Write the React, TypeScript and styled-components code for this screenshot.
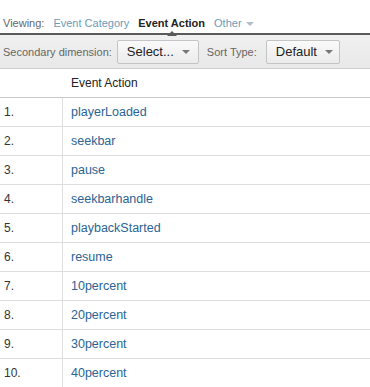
import styled, { createGlobalStyle } from 'styled-components';

const GlobalStyle = createGlobalStyle`
  html, body {
    margin: 0;
    padding: 0;
    background: #fff;
  }
  body {
    font-family: 'Liberation Sans', Arial, sans-serif;
    font-size: 12px;
    color: #333;
  }
`;

const Page = styled.div`
  width: 370px;
  height: 387px;
  overflow: hidden;
`;

const ViewingBar = styled.div`
  display: flex;
  align-items: center;
  gap: 9px;
  height: 33px;
  padding: 12px 0 0 3px;
  box-sizing: border-box;
  font-size: 11px;
`;

const ViewLabel = styled.span`
  color: #666;
`;

const ViewLink = styled.span<{ $active?: boolean }>`
  position: relative;
  color: ${p => (p.$active ? '#222' : '#6c9bba')};
  font-weight: ${p => (p.$active ? 'bold' : 'normal')};
`;

const Notch = styled.span`
  position: absolute;
  left: 50%;
  bottom: -7px;
  margin-left: -5px;
  width: 0;
  height: 0;
  border-left: 5px solid transparent;
  border-right: 5px solid transparent;
  border-bottom: 5px solid #5a5a5a;
`;

const Caret = styled.span<{ $color?: string; $gap?: number }>`
  display: inline-block;
  width: 0;
  height: 0;
  margin-left: ${p => p.$gap ?? 5}px;
  vertical-align: middle;
  border-left: 4px solid transparent;
  border-right: 4px solid transparent;
  border-top: 4px solid ${p => p.$color || '#aaa'};
`;

const Toolbar = styled.div`
  display: flex;
  align-items: center;
  height: 36px;
  padding-left: 3px;
  box-sizing: border-box;
  border-top: 2px solid #5a5a5a;
  border-bottom: 1px solid #cfcfcf;
  background: linear-gradient(#f0f0f0, #e8e8e8);
  color: #666;
  font-size: 11px;
`;

const ToolLabel = styled.span<{ $gap: number }>`
  margin-right: ${p => p.$gap}px;
`;

const DropButton = styled.div<{ $width: number }>`
  display: flex;
  align-items: center;
  width: ${p => p.$width}px;
  height: 24px;
  margin-right: 8px;
  padding-left: 9px;
  box-sizing: border-box;
  border: 1px solid #c4c4c4;
  border-radius: 2px;
  background: linear-gradient(#fafafa, #ebebeb);
  color: #222;
  font-size: 13px;
`;

const Table = styled.div`
  display: grid;
  grid-template-columns: 63px 1fr;
`;

const Cell = styled.div<{ $head?: boolean; $link?: boolean; $first?: boolean }>`
  display: flex;
  align-items: center;
  height: 29px;
  box-sizing: border-box;
  padding-left: ${p => (p.$first ? '4px' : '8px')};
  border-bottom: 1px solid ${p => (p.$head ? '#c8c8c8' : '#dedede')};
  border-right: ${p => (p.$first ? '1px solid #dedede' : 'none')};
  color: ${p => (p.$link ? '#2a6494' : '#333')};
  font-size: ${p => (p.$link ? '12.5px' : '12px')};
`;

const HeadCell = styled(Cell)`
  border-right: none;
  color: #222;
`;

const rows = [
  'playerLoaded',
  'seekbar',
  'pause',
  'seekbarhandle',
  'playbackStarted',
  'resume',
  '10percent',
  '20percent',
  '30percent',
  '40percent',
];

export default function App() {
  return (
    <Page>
      <GlobalStyle />
      <ViewingBar>
        <ViewLabel>Viewing:</ViewLabel>
        <ViewLink>Event Category</ViewLink>
        <ViewLink $active>
          Event Action
          <Notch />
        </ViewLink>
        <ViewLink>
          Other
          <Caret $color="#b0bec8" $gap={4} />
        </ViewLink>
      </ViewingBar>
      <Toolbar>
        <ToolLabel $gap={5}>Secondary dimension:</ToolLabel>
        <DropButton $width={82}>
          Select...
          <Caret $color="#777" $gap={8} />
        </DropButton>
        <ToolLabel $gap={9}>Sort Type:</ToolLabel>
        <DropButton $width={74}>
          Default
          <Caret $color="#777" $gap={8} />
        </DropButton>
      </Toolbar>
      <Table>
        <HeadCell $head $first />
        <HeadCell $head>Event Action</HeadCell>
        {rows.map((name, i) => (
          <>
            <Cell key={`n${i}`} $first>
              {i + 1}.
            </Cell>
            <Cell key={`v${i}`} $link>
              {name}
            </Cell>
          </>
        ))}
      </Table>
    </Page>
  );
}
